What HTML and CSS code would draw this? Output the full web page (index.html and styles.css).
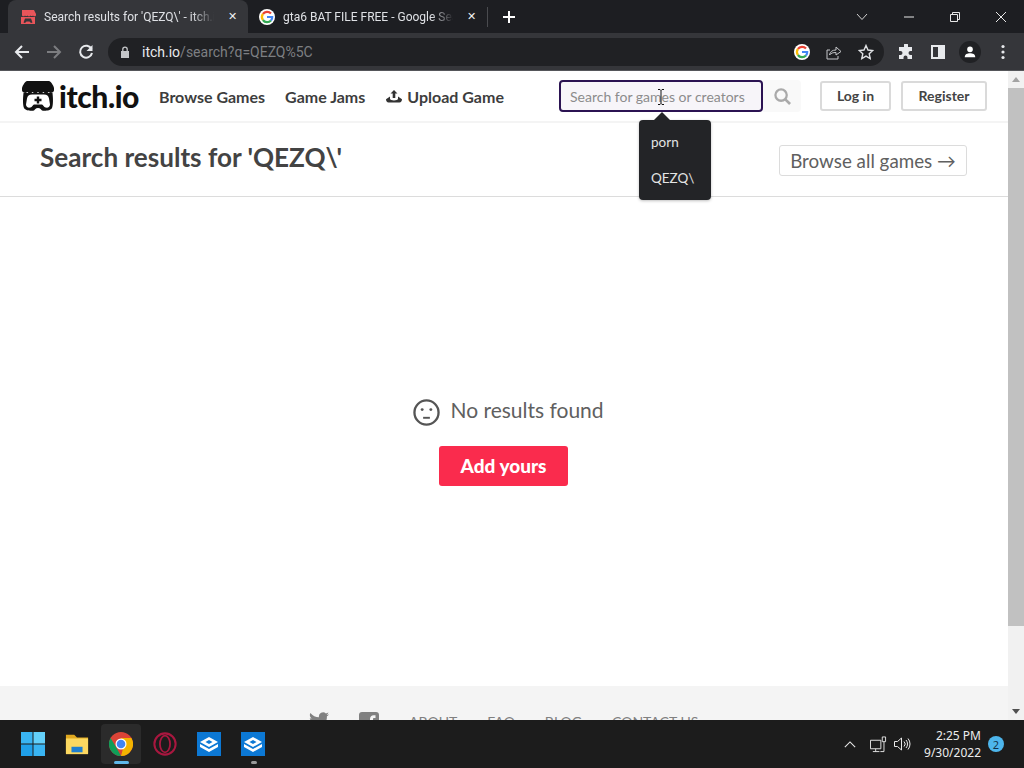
FILE: index.html
```html
<!DOCTYPE html>
<html lang="en">
<head>
<meta charset="utf-8">
<title>Search results for 'QEZQ\' - itch.io</title>
<link rel="stylesheet" href="styles.css">
</head>
<body>
<div class="screen">
  <div class="tabstrip">
    <div class="tab tab-active">
      <svg class="favicon" viewBox="0 0 16 16"><path fill="#e8555a" d="M2 1h12l2 4v1.500a2 2 0 0 1-3 0 2 2 0 0 1-2.500 0 2 2 0 0 1-3 0 2 2 0 0 1-2.500 0 2 2 0 0 1-3 0V5z"/><path fill="#e8555a" d="M1 8h14v7H1z"/><path fill="#35363a" d="M5 9.500h6l1.500 4-1.500.5-1.500-1.500h-3L5 14l-1.500-.5z"/></svg>
      <span class="tab-title">Search results for 'QEZQ\' - itch.io</span>
      <span class="tab-close">✕</span>
    </div>
    <div class="tab">
      <svg class="favicon" viewBox="0 0 16 16"><circle cx="8" cy="8" r="8" fill="#fff"/><path fill="none" stroke="#ea4335" stroke-width="2.200" d="M12 4.500A5.200 5.200 0 0 0 3.900 5"/><path fill="none" stroke="#fbbc05" stroke-width="2.200" d="M3.900 5a5.200 5.200 0 0 0 0 6"/><path fill="none" stroke="#34a853" stroke-width="2.200" d="M3.900 11a5.200 5.200 0 0 0 8.100.5"/><path fill="none" stroke="#4285f4" stroke-width="2.200" d="M12 11.500A5.200 5.200 0 0 0 13.200 8H8"/></svg>
      <span class="tab-title">gta6 BAT FILE FREE - Google Search</span>
      <span class="tab-close">✕</span>
    </div>
    <span class="tab-sep"></span>
    <svg class="new-tab" viewBox="0 0 12 12"><path d="M6 0v12M0 6h12" stroke="#fff" stroke-width="2"/></svg>
    <div class="window-controls">
      <svg class="win-icon win-chevron" viewBox="0 0 12 8"><path d="M1 1l5 5.500L11 1" fill="none" stroke="#d0d0d0" stroke-width="1"/></svg>
      <svg class="win-icon win-min" viewBox="0 0 12 12"><path d="M1 6h10" stroke="#e8e8e8" stroke-width="1"/></svg>
      <svg class="win-icon win-restore" viewBox="0 0 12 12"><path d="M1.500 3.500h7v7h-7zM3.500 3.500v-2h7v7h-2" fill="none" stroke="#e8e8e8" stroke-width="1"/></svg>
      <svg class="win-icon win-close" viewBox="0 0 12 12"><path d="M1 1l10 10M11 1L1 11" stroke="#e8e8e8" stroke-width="1"/></svg>
    </div>
  </div>
  <div class="toolbar">
    <svg class="nav-icon" viewBox="0 0 16 16"><path d="M15 8H2M8 2L2 8l6 6" fill="none" stroke="#e8eaed" stroke-width="2"/></svg>
    <svg class="nav-icon" viewBox="0 0 16 16"><path d="M1 8h13M8 2l6 6-6 6" fill="none" stroke="#7c7d80" stroke-width="2"/></svg>
    <svg class="nav-icon" viewBox="0 0 16 16"><path d="M13.500 5A6 6 0 1 0 14 9" fill="none" stroke="#e8eaed" stroke-width="2"/><path d="M14.500 1v6h-6z" fill="#e8eaed"/></svg>
    <div class="omnibox">
      <svg class="lock" viewBox="0 0 10 12"><path d="M1 5h8v7H1z" fill="#c4c6c9"/><path d="M2.800 5V3.300a2.200 2.200 0 0 1 4.400 0V5" fill="none" stroke="#c4c6c9" stroke-width="1.300"/></svg>
      <span class="url"><span class="url-host">itch.io</span>/search?q=QEZQ%5C</span>
      <span class="omni-actions">
        <svg class="g-icon" viewBox="0 0 16 16"><circle cx="8" cy="8" r="8" fill="#fff"/><path fill="none" stroke="#ea4335" stroke-width="2.200" d="M12 4.500A5.200 5.200 0 0 0 3.900 5"/><path fill="none" stroke="#fbbc05" stroke-width="2.200" d="M3.900 5a5.200 5.200 0 0 0 0 6"/><path fill="none" stroke="#34a853" stroke-width="2.200" d="M3.900 11a5.200 5.200 0 0 0 8.100.5"/><path fill="none" stroke="#4285f4" stroke-width="2.200" d="M12 11.500A5.200 5.200 0 0 0 13.200 8H8"/></svg>
        <svg class="omni-icon" viewBox="0 0 16 16"><path d="M4 6H1v9h11v-3" fill="none" stroke="#c4c6c9" stroke-width="1"/><path d="M3.500 11c.5-3.500 3-5 6.500-5V3l5 4.500L10 11V8.500c-3 0-5 .5-6.500 2.500z" fill="none" stroke="#c4c6c9" stroke-width="1"/></svg>
        <svg class="omni-icon" viewBox="0 0 16 16"><path d="M8 1.500l2 4.500 4.800.5-3.600 3.200 1 4.800L8 12.100l-4.200 2.400 1-4.800L1.200 6.500 6 6z" fill="none" stroke="#e0e2e5" stroke-width="1.400"/></svg>
      </span>
    </div>
    <svg class="tool-icon" viewBox="0 0 16 16"><path fill="#e8eaed" d="M6 1a2 2 0 0 1 4 0v2h4v4h-1.500a2 2 0 0 0 0 4H14v4H9.500v-1.500a2 2 0 0 0-4 0V15H1v-4h1.500a2 2 0 0 0 0-4H1V3h5z"/></svg>
    <svg class="tool-icon" viewBox="0 0 16 16"><path fill="#e8eaed" fill-rule="evenodd" d="M1 1h14v14H1zM3 3v10h5V3z"/></svg>
    <span class="avatar"><svg viewBox="0 0 16 16"><circle cx="8" cy="5" r="3.200" fill="#fff"/><path fill="#fff" d="M2 14c0-3.500 3-4.500 6-4.500s6 1 6 4.500z"/></svg></span>
    <svg class="menu-dots" viewBox="0 0 4 16"><circle cx="2" cy="2.500" r="1.600" fill="#e8eaed"/><circle cx="2" cy="8" r="1.600" fill="#e8eaed"/><circle cx="2" cy="13.500" r="1.600" fill="#e8eaed"/></svg>
  </div>
  <div class="viewport">
    <div class="page">
      <header class="site-header">
        <a class="logo">
          <svg class="logo-mark" viewBox="0 0 32 30"><path fill="#111" d="M5 0h22c1.500 0 4.500 4.500 5 7v2.500a3.200 3.200 0 0 1-5.300 1.600 3.200 3.200 0 0 1-5.300 0 3.200 3.200 0 0 1-5.400 0 3.200 3.200 0 0 1-5.400 0 3.200 3.200 0 0 1-5.300 0A3.200 3.200 0 0 1 0 9.500V7C.500 4.500 3.500 0 5 0z"/><path fill="#111" d="M1.500 12h29c.7 6 .7 12-.5 15-1.500 3-8 3-10 2.500-1-1-1.500-2.500-4-2.500s-3 1.500-4 2.500c-2 .5-8.500.5-10-2.500-1.200-3-1.200-9-.5-15z"/><path fill="#fff" d="M10 13.500h12c3 0 4.500 1.500 5 4l1 6c0 2.500-2 3.500-4.500 3-1.500-.5-2.500-2.500-3.500-3h-8c-1 .5-2 2.500-3.500 3-2.500.5-4.500-.5-4.500-3l1-6c.5-2.500 2-4 5-4z"/><path fill="#111" d="M14.800 15.500h2.400v2.300h2.300v2.400h-2.300v2.300h-2.400v-2.300h-2.300v-2.400h2.300z"/></svg>
          <span class="logo-text">itch.io</span>
        </a>
        <nav class="nav">
          <a class="nav-link">Browse Games</a>
          <a class="nav-link">Game Jams</a>
          <a class="nav-link nav-upload"><svg class="upload-icon" viewBox="0 0 16 14"><path fill="#333" d="M8 0l3.500 3.500H9.300V8H6.700V3.500H4.500z"/><path fill="#333" d="M4 6.500v2.300c0 1 2 1.700 4 1.700s4-.7 4-1.700V6.500l4 2.800c0 1.700-1 3.200-2.500 3.200h-11C1 12.500 0 11 0 9.300z"/></svg>Upload Game</a>
        </nav>
        <div class="search">
          <input class="search-input" type="text" placeholder="Search for games or creators">
          <span class="search-btn"><svg viewBox="0 0 18 18"><circle cx="7.500" cy="7.500" r="6" fill="none" stroke="#aaa" stroke-width="2.400"/><path d="M12 12l5 5" stroke="#aaa" stroke-width="2.800"/></svg></span>
          <svg class="cursor" viewBox="0 0 8 16"><path d="M1 .5h2l1 1 1-1h2M1 15.500h2l1-1 1 1h2M4 1.500v13" fill="none" stroke="#111" stroke-width="1"/></svg>
          <div class="suggest">
            <a class="suggest-item">porn</a>
            <a class="suggest-item">QEZQ\</a>
          </div>
        </div>
        <div class="auth">
          <a class="btn btn-login">Log in</a>
          <a class="btn btn-register">Register</a>
        </div>
      </header>
      <section class="titlebar">
        <h1 class="title">Search results for 'QEZQ\'</h1>
        <a class="browse-all">Browse all games →</a>
      </section>
      <main class="empty">
        <div class="empty-msg">
          <svg class="sad" viewBox="0 0 28 28"><circle cx="14" cy="14" r="12.500" fill="none" stroke="#555" stroke-width="2.400"/><circle cx="9.500" cy="11" r="1.500" fill="#555"/><circle cx="18.500" cy="11" r="1.500" fill="#555"/><path d="M10.500 19.500h7" stroke="#555" stroke-width="2"/></svg>
          <span class="empty-text">No results found</span>
        </div>
        <a class="add-yours">Add yours</a>
      </main>
      <footer class="site-footer">
        <svg class="foot-icon foot-twitter" viewBox="0 0 24 20"><path fill="#808080" d="M24 2.400c-.9.400-1.800.700-2.800.800 1-.6 1.800-1.600 2.200-2.700-1 .6-2 1-3.100 1.200A4.900 4.900 0 0 0 12 6.200C8 6 4.300 4.100 1.700.9.400 3.100 1 6 3.200 7.500c-.8 0-1.600-.2-2.200-.6 0 2.300 1.600 4.300 3.900 4.800-.7.200-1.500.2-2.200.1.600 2 2.400 3.400 4.600 3.400A9.900 9.900 0 0 1 0 17.200 14 14 0 0 0 21.500 5c1-.7 1.800-1.600 2.500-2.600z"/></svg>
        <svg class="foot-icon foot-fb" viewBox="0 0 20 20"><rect width="20" height="20" rx="3" fill="#808080"/><path fill="#f4f4f4" d="M11 20v-8H8.500V9H11V7c0-2.500 1.500-3.800 3.700-3.800H16.500V6h-1.300c-1 0-1.200.5-1.200 1.200V9h2.500l-.4 3H14v8z"/></svg>
        <a class="foot-link">ABOUT</a>
        <a class="foot-link">FAQ</a>
        <a class="foot-link">BLOG</a>
        <a class="foot-link">CONTACT US</a>
      </footer>
    </div>
    <div class="scrollbar">
      <svg class="scroll-arrow" viewBox="0 0 8 5"><path d="M4 0l4 5H0z" fill="#a3a3a3"/></svg>
      <div class="scroll-track"><div class="scroll-thumb"></div></div>
      <svg class="scroll-arrow" viewBox="0 0 8 5"><path d="M0 0h8L4 5z" fill="#505050"/></svg>
    </div>
  </div>
  <div class="taskbar">
    <svg class="task-icon" viewBox="0 0 24 24"><path fill="#39b4f2" d="M0 0h11.500v11.500H0z"/><path fill="#63d0fa" d="M12.500 0H24v11.500H12.500z"/><path fill="#1f9fe8" d="M0 12.500h11.500V24H0z"/><path fill="#39b4f2" d="M12.500 12.500H24V24H12.500z"/></svg>
    <svg class="task-icon" viewBox="0 0 26 24"><path fill="#e0a81f" d="M1 2h9l3 3h12v17H1z"/><path fill="#fcd860" d="M1 6h24v17H1z"/><path fill="#1e7fd0" d="M7 15h12v6H7z"/></svg>
    <span class="task-slot task-active">
      <svg class="task-icon" viewBox="0 0 24 24"><circle cx="12" cy="12" r="12" fill="#db4437"/><path fill="#0f9d58" d="M12 24A12 12 0 0 1 1.600 6L7 15l5 9z"/><path fill="#f4b400" d="M12 24a12 12 0 0 0 10.400-18H12l3 7z"/><circle cx="12" cy="12" r="5.500" fill="#fff"/><circle cx="12" cy="12" r="4.300" fill="#4285f4"/></svg>
      <i class="task-bar"></i>
    </span>
    <svg class="task-icon" viewBox="0 0 26 26"><circle cx="13" cy="13" r="11.500" fill="none" stroke="#a8173f" stroke-width="2.200"/><ellipse cx="13" cy="13" rx="5.500" ry="9" fill="none" stroke="#a8173f" stroke-width="2"/></svg>
    <svg class="task-icon" viewBox="0 0 24 24"><path fill="#0c78d4" d="M0 0h24v24H0z"/><path fill="#fff" d="M12 5l9 5-9 5-9-5z"/><path fill="#0c78d4" d="M12 8l3.500 2-3.500 2-3.500-2z"/><path fill="#fff" d="M3 12l9 5 9-5v3l-9 5-9-5z"/></svg>
    <span class="task-slot">
      <svg class="task-icon" viewBox="0 0 24 24"><path fill="#0c78d4" d="M0 0h24v24H0z"/><path fill="#fff" d="M12 5l9 5-9 5-9-5z"/><path fill="#0c78d4" d="M12 8l3.500 2-3.500 2-3.500-2z"/><path fill="#fff" d="M3 12l9 5 9-5v3l-9 5-9-5z"/></svg>
      <i class="task-dot"></i>
    </span>
    <div class="tray">
      <svg class="tray-chevron" viewBox="0 0 14 8"><path d="M1 7l6-6 6 6" fill="none" stroke="#e8e8e8" stroke-width="1.300"/></svg>
      <svg class="tray-net" viewBox="0 0 18 18"><path d="M.5 4.500h11v9H.5zM3 16.500h7M6 13.500v3" fill="none" stroke="#e8e8e8" stroke-width="1"/><path d="M13 1h3.500v5H13zM14.800 6v10.500H11" fill="none" stroke="#e8e8e8" stroke-width="1"/></svg>
      <svg class="tray-vol" viewBox="0 0 17 14"><path d="M.5 4.500h3L7.500 1v12l-4-3.500h-3z" fill="none" stroke="#e8e8e8" stroke-width="1"/><path d="M10 4.500a3.500 3.500 0 0 1 0 5M12 3a6 6 0 0 1 0 8M14 1.500a8.500 8.500 0 0 1 0 11" fill="none" stroke="#e8e8e8" stroke-width="1"/></svg>
      <div class="clock"><span>2:25 PM</span><span>9/30/2022</span></div>
      <span class="notif">2</span>
    </div>
  </div>
</div>
</body>
</html>
```
FILE: styles.css
```css
* { box-sizing: border-box; }
html, body { margin: 0; height: 100%; overflow: hidden; }
body { font-family: "Lato", "Liberation Sans", sans-serif; color: #333; }
.screen { width: 1024px; height: 768px; display: flex; flex-direction: column; }

/* Tab strip */
.tabstrip { height: 33px; flex: none; background: #1d1e22; display: flex; align-items: flex-end; padding-left: 8px; font-family: "Roboto", "Liberation Sans", sans-serif; }
.tab { width: 239px; height: 33px; display: flex; align-items: center; padding: 0 6px 0 11px; color: #dfe1e5; font-size: 12px; border-radius: 8px 8px 0 0; }
.tab-active { width: 240px; background: #35363a; padding: 0 6px 0 12px; }
.favicon { width: 16px; height: 16px; flex: none; margin-right: 8px; }
.tab-title { flex: 1; white-space: nowrap; overflow: hidden; min-width: 0; -webkit-mask-image: linear-gradient(90deg, #000 85%, transparent 98%); mask-image: linear-gradient(90deg, #000 85%, transparent 98%); }
.tab-close { width: 20px; text-align: center; font-size: 11px; color: #f0f0f0; flex: none; margin-left: 4px; }
.tab-sep { width: 1px; height: 20px; background: #4a4b4f; align-self: center; flex: none; }
.new-tab { width: 12px; height: 12px; align-self: center; margin-left: 15px; flex: none; }
.window-controls { margin-left: auto; align-self: stretch; display: flex; align-items: center; }
.win-icon { display: block; width: 12px; height: 12px; flex: none; }
.win-chevron { margin-right: 35px; height: 8px; }
.win-min { margin-right: 34px; }
.win-restore { margin-right: 34px; }
.win-close { margin-right: 17px; }

/* Toolbar */
.toolbar { height: 38px; flex: none; background: #35363a; display: flex; align-items: center; padding: 0 0 0 14px; border-bottom: 1px solid #55565a; }
.nav-icon { width: 16px; height: 16px; flex: none; margin-right: 16px; }
.omnibox { width: 776px; height: 28px; margin-left: -2px; border-radius: 14px; background: #202124; display: flex; align-items: center; padding: 0 10px 0 12px; font-family: "Roboto", "Liberation Sans", sans-serif; font-size: 14px; color: #7d7f82; }
.lock { width: 10px; height: 12px; margin-right: 12px; flex: none; }
.url-host { color: #e8eaed; }
.omni-actions { margin-left: auto; display: flex; align-items: center; gap: 16px; }
.g-icon { width: 16px; height: 16px; display: block; }
.omni-icon { width: 16px; height: 16px; display: block; }
.tool-icon { width: 16px; height: 16px; flex: none; margin-left: 14px; }
.tool-icon + .tool-icon { margin-left: 16px; }
.avatar { width: 22px; height: 22px; border-radius: 50%; background: #202124; margin-left: 13px; display: flex; align-items: center; justify-content: center; flex: none; }
.avatar svg { width: 14px; height: 14px; }
.menu-dots { width: 4px; height: 16px; margin-left: 20px; flex: none; }

/* Viewport */
.viewport { flex: 1; min-height: 0; display: flex; background: #fff; }
.page { flex: 1; min-width: 0; display: flex; flex-direction: column; }
.scrollbar { width: 16px; flex: none; background: #f1f1f1; display: flex; flex-direction: column; align-items: center; }
.scroll-arrow { width: 8px; height: 5px; margin: 6px 0; flex: none; }
.scroll-track { flex: 1; width: 100%; }
.scroll-thumb { height: 538px; background: #c1c1c1; }

/* Site header */
.site-header { height: 52px; flex: none; display: flex; align-items: center; padding: 0 21px 0 22px; border-bottom: 2px solid #f4f4f4; }
.logo { display: flex; align-items: center; }
.logo-mark { width: 32px; height: 30px; display: block; margin-right: 5px; }
.logo-text { font-weight: 900; font-size: 30px; color: #111; letter-spacing: -.4px; line-height: 30px; }
.nav { display: flex; align-items: center; margin-left: 20px; gap: 20px; }
.nav-link { font-size: 16px; font-weight: 700; color: #3d3d3d; white-space: nowrap; display: flex; align-items: center; }
.upload-icon { width: 16px; height: 14px; margin: 2px 5px 0 1px; }
.search { position: relative; margin-left: auto; display: flex; align-items: center; }
.search-input { width: 204px; height: 32px; border: 2px solid #2b1352; border-radius: 4px; background: #f7f5f9; padding: 0 9px; font: 14px "Lato", "Liberation Sans", sans-serif; outline: none; }
.search-input::placeholder { color: #8c8c8c; opacity: 1; }
.search-btn { width: 38px; height: 32px; background: #f9f9f9; display: flex; align-items: center; justify-content: center; border-radius: 0 4px 4px 0; }
.search-btn svg { width: 17px; height: 17px; }
.cursor { position: absolute; left: 98px; top: 9px; width: 8px; height: 16px; }
.suggest { position: absolute; left: 80px; top: 40px; width: 72px; height: 80px; background: #232427; border-radius: 4px; color: #e4e4e4; font-size: 13.500px; padding: 4px 12px; z-index: 5; box-shadow: 0 1px 3px rgba(0,0,0,.25); }
.suggest::before { content: ""; position: absolute; left: 15px; top: -8px; border: 8px solid transparent; border-top: 0; border-bottom-color: #232427; }
.suggest-item { display: block; height: 36px; line-height: 36px; }
.auth { display: flex; gap: 10px; margin-left: 19px; }
.btn { height: 30px; display: flex; align-items: center; justify-content: center; border: 2px solid #dadada; border-radius: 3px; font-size: 14px; font-weight: 700; color: #444; padding-bottom: 1px; }
.btn-login { width: 71px; }
.btn-register { width: 86px; }

/* Title bar */
.titlebar { height: 74px; flex: none; display: flex; align-items: center; justify-content: space-between; padding: 0 41px 2px 40px; border-bottom: 1px solid #dcdcdc; }
.title { margin: 0 0 4px; font-size: 26.100px; font-weight: 700; color: #434343; }
.browse-all { height: 31px; width: 188px; margin-top: 4px; display: flex; align-items: center; justify-content: center; border: 1px solid #dcdcdc; border-radius: 3px; font-size: 18.800px; color: #606060; white-space: nowrap; padding-bottom: 1px; }

/* Empty state */
.empty { flex: 1; min-height: 0; display: flex; flex-direction: column; align-items: center; padding: 197px 1px 0 0; }
.empty-msg { display: flex; align-items: center; gap: 10px; font-size: 21px; color: #606060; height: 32px; padding-left: 10px; }
.empty-text { margin-bottom: 2px; }
.sad { width: 27px; height: 27px; display: block; margin-top: 4px; }
.add-yours { margin-top: 20px; width: 129px; height: 40px; background: #fa2b4d; border-radius: 3px; color: #fff; font-weight: 900; font-size: 19px; display: flex; align-items: center; justify-content: center; padding-bottom: 2px; }

/* Footer */
.site-footer { height: 34px; flex: none; background: #f4f4f4; display: flex; align-items: flex-start; padding: 26px 0 0 309px; overflow: hidden; }
.foot-icon { display: block; flex: none; }
.foot-twitter { width: 20px; height: 17px; }
.foot-fb { width: 20px; height: 20px; margin-left: 30px; }
.foot-link { font-size: 14px; color: #808080; margin-left: 30px; white-space: nowrap; line-height: 20px; }

/* Taskbar */
.taskbar { height: 48px; flex: none; background: #1c1c1c; display: flex; align-items: center; padding-left: 21px; gap: 20px; position: relative; }
.task-icon { width: 24px; height: 24px; display: block; flex: none; }
.task-slot { width: 24px; height: 48px; display: flex; align-items: center; justify-content: center; position: relative; flex: none; }
.task-active::before { content: ""; position: absolute; left: -8px; right: -8px; top: 4px; bottom: 4px; background: #2b2b2b; border-radius: 4px; }
.task-active .task-icon { position: relative; }
.task-bar { position: absolute; left: 5px; bottom: 4px; width: 15px; height: 3px; border-radius: 2px; background: #5fb8ea; }
.task-dot { position: absolute; left: 10px; bottom: 4px; width: 6px; height: 3px; border-radius: 2px; background: #9a9a9a; }
.tray { margin-left: auto; display: flex; align-items: center; color: #ececec; padding-right: 20px; font-family: "Noto Sans", "Open Sans", sans-serif; }
.tray-chevron { width: 12px; height: 7px; margin-right: 14px; }
.tray-net { width: 17px; height: 17px; margin-right: 7px; }
.tray-vol { width: 17px; height: 14px; margin-right: 13px; }
.clock { display: flex; flex-direction: column; align-items: flex-end; font-size: 12px; line-height: 17px; }
.notif { width: 16px; height: 16px; border-radius: 50%; background: #4db6ec; color: #12324a; font-size: 11px; display: flex; align-items: center; justify-content: center; margin-left: 7px; }
```
